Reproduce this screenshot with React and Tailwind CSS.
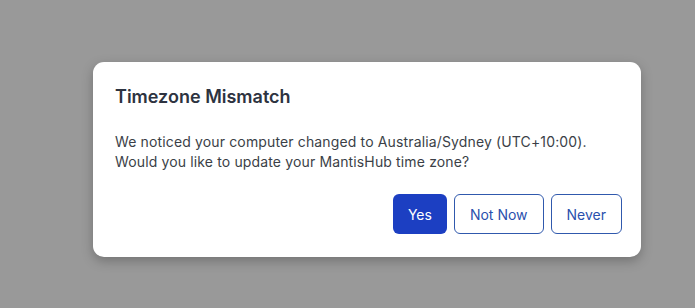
import React from 'react';

function TimezoneDialog() {
  return (
    <div className="w-[548px] bg-white rounded-[11px] shadow-[0_4px_12px_rgba(0,0,0,0.25)] pl-[22px] pr-[19px] pt-[21px] pb-[23px]">
      <h2 className="text-[18px] leading-[28px] font-semibold text-[#2d3340]">
        Timezone Mismatch
      </h2>
      <p className="mt-[21px] text-[14px] leading-[20px] tracking-[0.14px] text-[#3b3f47]">
        We noticed your computer changed to Australia/Sydney (UTC+10:00).
        <br />
        Would you like to update your MantisHub time zone?
      </p>
      <div className="mt-[22px] flex justify-end gap-[7px]">
        <button className="h-10 px-[15px] rounded-[6px] bg-[#1c3fc2] text-white text-[14px]">
          Yes
        </button>
        <button className="h-10 px-[15px] rounded-[6px] border border-[#3059ad] text-[#2a50ad] text-[14px] bg-white">
          Not Now
        </button>
        <button className="h-10 px-[15px] rounded-[6px] border border-[#3059ad] text-[#2a50ad] text-[14px] bg-white">
          Never
        </button>
      </div>
    </div>
  );
}

export default function App() {
  return (
    <div
      className="min-h-[308px] w-full bg-[#999999] pl-[93px] pt-[62px]"
      style={{ fontFamily: 'Inter, "Noto Sans", sans-serif' }}
    >
      <TimezoneDialog />
    </div>
  );
}
